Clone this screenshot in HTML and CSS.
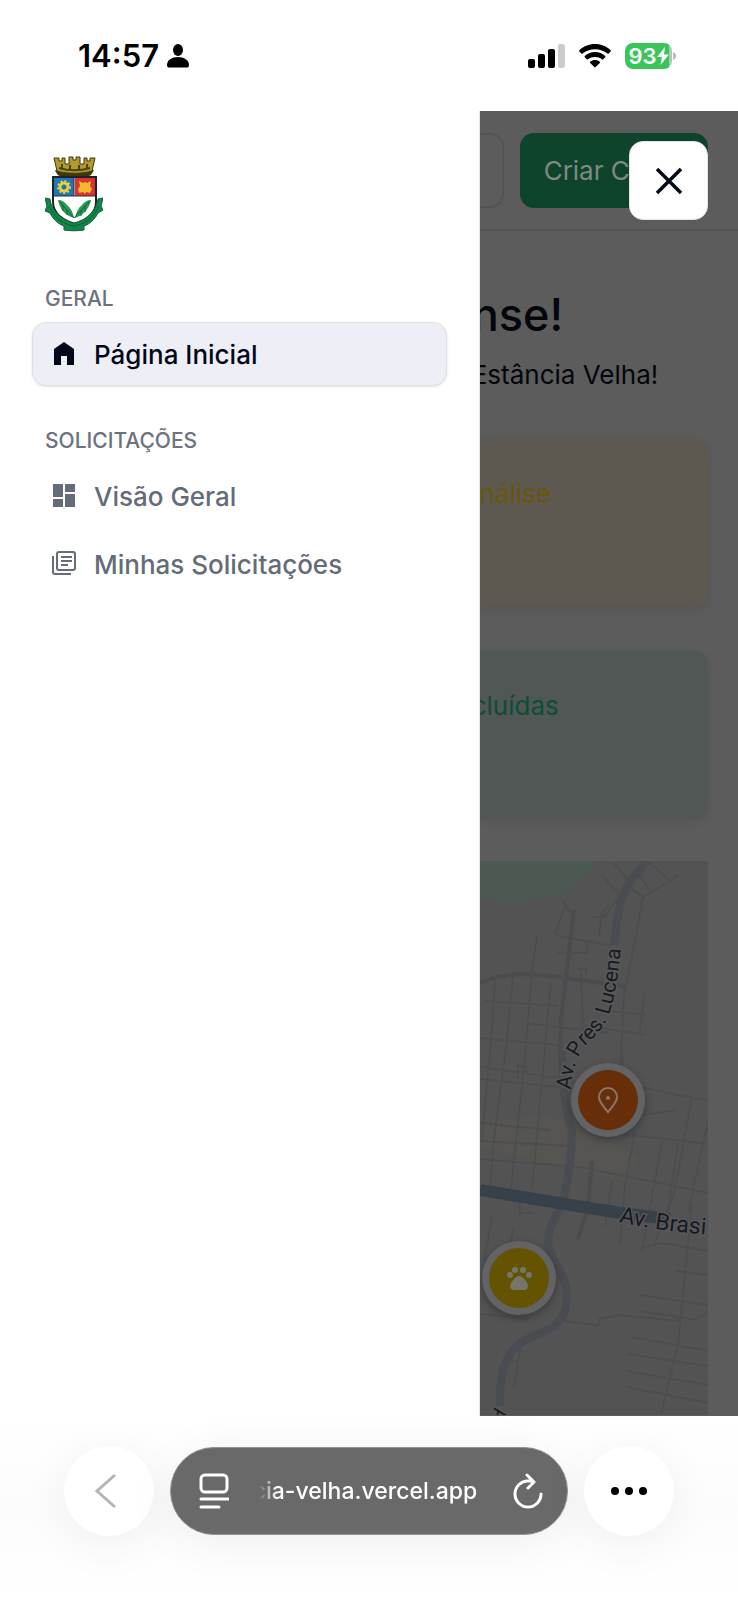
FILE: index.html
```html
<!DOCTYPE html>
<html lang="pt-br">
<head>
  <meta charset="UTF-8" />
  <meta name="viewport" content="width=device-width, initial-scale=1.0" />
  <title>Estância Velha</title>
  <link rel="stylesheet" href="styles.css">
</head>
<body>

  <div class="status-bar">
    <div class="status-hora">
      <span>14:57</span>
      <svg width="22" height="24" viewBox="0 0 22 24"><ellipse cx="11" cy="6" rx="5" ry="6"/><path d="M0 21C0 16 5 13 11 13s11 3 11 8c0 2-1 2.500-2 2.500H2C1 23.500 0 23 0 21z"/></svg>
    </div>
    <div class="status-icones">
      <svg width="37" height="24" viewBox="0 0 37 24"><rect y="15" width="7" height="9" rx="2"/><rect x="10" y="10" width="7" height="14" rx="2"/><rect x="20" y="5" width="7" height="19" rx="2"/><rect class="sinal-fraco" x="30" width="7" height="24" rx="2"/></svg>
      <svg width="32" height="24" viewBox="0 0 32 24"><path d="M16 0C9.800 0 4.200 2.400.4 6.200c-.4.400-.4.900 0 1.300l1.900 1.900c.4.400.9.400 1.300 0C6.800 6.900 11.200 5.200 16 5.200s9.200 1.700 12.400 4.200c.4.400.9.400 1.300 0l1.900-1.900c.4-.4.400-.9 0-1.300C27.800 2.400 22.200 0 16 0z"/><path d="M16 8c-4 0-7.500 1.500-10.200 4-.4.400-.4.900 0 1.300l1.900 1.900c.4.400.9.400 1.300 0 1.900-1.500 4.300-2.200 7-2.200s5.100.7 7 2.200c.4.400.9.400 1.300 0l1.900-1.900c.4-.4.400-.9 0-1.300C23.500 9.500 20 8 16 8z"/><path d="M16 16c-1.800 0-3.500.6-4.800 1.700-.4.400-.4.900 0 1.200l4.100 4.200c.4.400 1 .4 1.400 0l4.100-4.200c.4-.3.400-.8 0-1.200C19.500 16.600 17.800 16 16 16z"/></svg>
      <div class="bateria">
        <div class="bateria-carga">
          <span>93</span>
          <svg width="12" height="18" viewBox="0 0 12 18"><path d="M8 0 0 10h5L3.500 18 12 7.500H7z"/></svg>
        </div>
        <svg width="3" height="8" viewBox="0 0 3 8"><path d="M0 0q3 1 3 4T0 8z"/></svg>
      </div>
    </div>
  </div>

  <div class="app">
    <aside class="menu">
      <svg class="brasao" width="58" height="78" viewBox="0 0 58 78" role="img" aria-label="Brasão">
        <path d="M10 14h39l-3 5c-7 4-26 4-33 0z" fill="#4b4310"/>
        <path d="M9 2h5v3h3V2h3v6h4V1h4v3h3V1h4v7h4V2h3v3h3V2h5l-3 13c-9 3-26 3-35 0z" fill="#b39a2c" stroke="#3d390f"/>
        <path d="M14 12c9 3 22 3 31 0M17 8v4M25 9v4M34 9v4M42 8v4" fill="none" stroke="#4b4310" stroke-width="2"/>
        <path d="M10 15c9 4 29 4 38 0l-3 4c-7 4-25 4-32 0z" fill="#3d390f"/>
        <path d="M8 21h43v25c0 12-11 19-21 22C19 65 8 58 8 46z" fill="#fff" stroke="#20232a" stroke-width="2"/>
        <path d="M9 22h20v18H9z" fill="#1e75b8"/>
        <path d="M30 22h20v18H30z" fill="#d93530"/>
        <path d="M9 40h41M29 22v18" stroke="#26303c"/>
        <circle cx="19" cy="31" r="4" fill="none" stroke="#edcf39" stroke-width="3"/>
        <circle cx="19" cy="31" r="6" fill="none" stroke="#edcf39" stroke-width="2" stroke-dasharray="2 2"/>
        <path d="m34 25 4 2 2-1 2 1 4-2-1 5 2 3-2 4-4-1-1 2-2-2-4 1-1-4 2-3z" fill="#f3b72f"/>
        <path d="M29 62c-8-2-14-8-16-18 4 0 7 2 9 5 4 3 6 8 7 13zM30 62c7-2 14-8 16-18-4 0-7 2-9 5-4 3-6 8-7 13z" fill="#2c9858"/>
        <path d="M14 45l15 17 16-17M18 49v6M22 53v6M40 50v6M36 54v6" fill="none" stroke="#12633b"/>
        <path d="M0 42l5 1c1 11 11 21 24 24 13-3 23-13 24-24l5-1-2 8 2 4-5 3c-3 6-8 11-14 13v4c-6 1-14 1-20 0v-4C13 68 8 63 5 57l-5-2 2-5z" fill="#138549" stroke="#0b6134"/>
        <path d="M4 50c5 11 13 18 25 20 12-2 20-9 25-20" fill="none" stroke="#0b6134"/>
      </svg>

      <nav class="menu-nav">
        <section class="grupo">
          <h2 class="grupo-titulo">GERAL</h2>
          <a class="item ativo" href="#">
            <svg width="30" height="30" viewBox="0 0 30 30"><path d="M15 3 5 10v16h7v-9h6v9h7V10z"/></svg>
            Página Inicial
          </a>
        </section>
        <section class="grupo">
          <h2 class="grupo-titulo">SOLICITAÇÕES</h2>
          <a class="item" href="#">
            <svg width="30" height="30" viewBox="0 0 30 30"><path d="M4 3h10v13H4zM16 3h10v8H16zM4 18h10v8H4zM16 13h10v13H16z"/></svg>
            Visão Geral
          </a>
          <a class="item" href="#">
            <svg width="30" height="30" viewBox="0 0 30 30"><g fill="none" stroke="currentColor" stroke-width="2"><rect x="8" y="3" width="18" height="18" rx="2"/><path d="M4 7v16q0 2 2 2h16M12 8h11M12 12h11M12 16h7"/></g></svg>
            Minhas Solicitações
          </a>
        </section>
      </nav>
    </aside>

    <main class="pagina">
      <header class="topo">
        <span class="botao-vazio"></span>
        <button class="botao-criar">Criar Conta</button>
        <button class="fechar" aria-label="Fechar">
          <svg width="30" height="30" viewBox="0 0 30 30"><path d="M3 3l24 24M27 3L3 27"/></svg>
        </button>
      </header>

      <div class="conteudo">
        <h1 class="cortado">nse!</h1>
        <p class="subtitulo cortado">Estância Velha!</p>
        <div class="card analise"><p>nálise</p></div>
        <div class="card concluidas"><p class="cortado">cluídas</p></div>

        <div class="mapa">
          <svg width="228" height="554" viewBox="0 0 228 554">
            <path d="M0 0h119c-18 28-48 42-91 43L0 38z" fill="#4c5953"/>
            <path d="M28 258l40-4 60 26 30 16-14 24-64-14-80-20v-24z" fill="#565552"/>
            <g class="rua">
              <path d="M122 14l18 21M134 2l14 17M158 13l12 16M168 0l22 20 8-6M190 20l-27 16-12-9M163 36l-9 48-10 50-2 42-2 30M112 56h12l13-17M119 76l3-24 8-8M75 73l10-28 9 10M84 40l7 12M75 74l57 11M57 74l-5 37M77 92h30V80M5 140l73 5M15 120l-3 48-10 110M33 115l-6 64-13 98-4 52M52 112l-6 74-15 142M71 121l-7 78-12 130M46 162l82 10M0 177l79 7M0 206l77 11M101 109l2 60M98 108h8v6M130 150l36 4M164 132l-4 38M100 164l66 10M141 180l2 25M38 218v-14l8 2v6"/>
              <path d="M0 218l78 8M0 262l70 7M140 222l88 18M162 254l35-5M0 298l100 8 128 26M140 273l88 10M0 280l90 5M212 235l-18 98-20 50M228 260l-20 92M155 270l-10 54-5 60M182 280l-20 110M198 282l-10 68M132 320l-7 45M161 387l21-5 46 8M212 343l-14 140-17 71M195 410l33 4M160 434l68 10M160 450l50 8q10 2 18-8M0 453l48 5M75 458l44 7v-7l20-4 60 6M190 452l12 9M152 476l76 14M148 493l80 12M146 510l82 14M146 526l82 16M42 478l-8 48M24 498l14 3M34 366l-9 40M12 356l-8 44M40 340v12h13"/>
            </g>
            <g class="avenida-fina">
              <path d="M0 122c30-14 60-10 145 4M94 48l-7 60-6 50q-2 50 2 80M112 300l-4 46-10 32"/>
            </g>
            <g class="avenida">
              <path d="M168 0q-26 24-29 50-4 16-4 34"/>
              <path d="M82 190q0 50 10 80-1 36-7 61c-4 22-17 30-17 50 2 22 19 30 19 54 0 42-36 32-54 54-12 14-14 40-13 56"/>
            </g>
            <path class="brasil" d="M0 329l140 23 50 6"/>
            <path id="linha-lucena" d="M91 229q1-29 16-46 20-18 24-36 9-32 11-78" fill="none"/>
            <path id="linha-brasil" d="M139 361q45 10 96 13" fill="none"/>
            <text class="rotulo"><textPath href="#linha-lucena">Av. Pres. Lucena</textPath></text>
            <text class="rotulo rotulo-maior"><textPath href="#linha-brasil">Av. Brasi</textPath></text>
            <text class="rotulo" transform="translate(14 546) rotate(100)">A</text>

            <g class="pino" transform="translate(128 239)">
              <circle class="pino-borda" r="37"/>
              <circle r="30" fill="#672e09"/>
              <path d="M0 12C-5 6-9 2-9-3a9 9 0 0 1 18 0c0 5-4 9-9 15z" fill="none" stroke="#88776d" stroke-width="2"/>
              <circle cy="-2" r="2" fill="#88776d"/>
            </g>
            <g class="pino" transform="translate(39 417)">
              <circle class="pino-borda" r="37"/>
              <circle r="30" fill="#645300"/>
              <g fill="#77756a"><circle cx="-9" cy="-3" r="3"/><circle cx="-4" cy="-8" r="3"/><circle cx="4" cy="-8" r="3"/><circle cx="10" cy="-3" r="3"/><path d="M0-2c4 0 9 7 9 10s-2 4-4 4H-5c-3 0-4-2-4-4S-4-2 0-2z"/></g>
            </g>
          </svg>
        </div>
      </div>
    </main>
  </div>

  <div class="navegador">
    <button class="redondo voltar" aria-label="Voltar">
      <svg width="40" height="40" viewBox="0 0 40 40"><path d="M26 4L8 20l18 16"/></svg>
    </button>
    <div class="endereco">
      <button class="icone-barra" aria-label="Abas">
        <svg width="30" height="36" viewBox="0 0 30 36"><rect x="2" y="2" width="26" height="17" rx="4"/><path d="M2 26h27M2 34h18"/></svg>
      </button>
      <span class="url">cia-velha.vercel.app</span>
      <button class="icone-barra" aria-label="Recarregar">
        <svg width="30" height="36" viewBox="0 0 30 36"><path d="M20 8H15A13 13 0 1 0 28 21M14 2l7 7-6 6"/></svg>
      </button>
    </div>
    <button class="redondo" aria-label="Mais">
      <svg width="38" height="10" viewBox="0 0 38 10"><circle cx="5" cy="5" r="4"/><circle cx="19" cy="5" r="4"/><circle cx="33" cy="5" r="4"/></svg>
    </button>
  </div>

</body>
</html>
```

FILE: styles.css
```css
* {
  box-sizing: border-box;
  margin: 0;
  padding: 0;
}

body {
  font-family: 'Inter', sans-serif;
  font-size: 26px;
  background-color: #fff;
  color: #04060b;
  display: flex;
  flex-direction: column;
  min-height: 100vh;
}

button {
  border: none;
  font: inherit;
  cursor: pointer;
}

a {
  color: inherit;
  text-decoration: none;
}

svg {
  display: block;
  flex-shrink: 0;
}

/* barra de status */
.status-bar {
  display: flex;
  justify-content: space-between;
  align-items: center;
  height: 111px;
  padding: 0 62px 0 78px;
  color: #000;
}

.status-hora,
.status-icones {
  display: flex;
  align-items: center;
  gap: 8px;
}

.status-hora {
  font-size: 31px;
  font-weight: 600;
}

.status-icones {
  gap: 14px;
}

.sinal-fraco {
  fill: #ccc;
}

.bateria {
  display: flex;
  align-items: center;
  gap: 1px;
  fill: #bbb;
}

.bateria-carga {
  display: flex;
  align-items: center;
  justify-content: center;
  width: 47px;
  height: 26px;
  border-radius: 8px;
  background: linear-gradient(to right, #3ac55b 93%, #a9cdb1 93%);
  color: #fff;
  font-size: 22px;
  font-weight: 600;
}

.bateria-carga svg {
  fill: #fff;
}

/* area do app */
.app {
  flex: 1;
  display: grid;
  grid-template-columns: 65fr 35fr;
}

.menu {
  position: relative;
  z-index: 1;
  background-color: #fff;
  border-right: 1px solid #e2e4e9;
  padding: 45px 32px;
}

.brasao {
  margin-left: 13px;
}

.menu-nav {
  display: flex;
  flex-direction: column;
  gap: 40px;
  margin-top: 50px;
}

.grupo {
  display: flex;
  flex-direction: column;
  gap: 4px;
}

.grupo-titulo {
  padding-left: 13px;
  font-size: 21px;
  line-height: 30px;
  font-weight: 500;
  color: #6b7280;
  margin-bottom: 4px;
}

.item {
  display: flex;
  align-items: center;
  gap: 15px;
  height: 64px;
  padding: 0 16px;
  border: 1px solid transparent;
  border-radius: 14px;
  font-weight: 500;
  color: #646b79;
}

.item svg {
  fill: currentColor;
}

.item.ativo {
  background-color: #eeeff6;
  border-color: #e0e1e7;
  box-shadow: 0 1px 3px rgba(0, 0, 0, 0.1);
  color: #020817;
}

/* pagina escurecida atras do menu */
.pagina {
  min-width: 0;
  background-color: #5c5c5c;
  overflow: hidden;
}

.topo {
  position: relative;
  display: flex;
  align-items: center;
  gap: 16px;
  height: 120px;
  padding-right: 30px;
  border-bottom: 2px solid #545454;
}

.botao-vazio {
  flex: 1;
  height: 75px;
  border: 2px solid #545454;
  border-left: none;
  border-radius: 0 14px 14px 0;
}

.botao-criar {
  height: 75px;
  padding: 0 24px;
  border-radius: 14px;
  background-color: #0e432c;
  color: #808a84;
  font-weight: 400;
}

.fechar {
  position: absolute;
  top: 30px;
  right: 30px;
  display: flex;
  align-items: center;
  justify-content: center;
  width: 79px;
  height: 79px;
  border: 1px solid #e2e4e9;
  border-radius: 14px;
  background-color: #fff;
}

.fechar svg {
  fill: none;
  stroke: #020817;
  stroke-width: 3.500;
}

.conteudo {
  padding: 56px 30px 0 0;
}

/* textos que continuam por baixo do menu */
.cortado {
  margin-left: -8px;
}

h1 {
  font-size: 45px;
  line-height: 56px;
  font-weight: 500;
}

.subtitulo {
  margin-top: 12px;
  line-height: 40px;
}

.card {
  height: 168px;
  margin-top: 44px;
  padding-top: 35px;
  border-radius: 0 14px 14px 0;
  line-height: 40px;
  box-shadow: 0 3px 8px rgba(0, 0, 0, 0.08);
}

.analise {
  background-color: #5d5850;
  color: #6a560b;
}

.concluidas {
  background-color: #505754;
  color: #0f4d34;
}

.mapa {
  margin-top: 42px;
  height: 554px;
  background-color: #535353;
  overflow: hidden;
}

.rua,
.avenida,
.avenida-fina {
  fill: none;
  stroke: #4b4c4f;
}

.rua {
  stroke-width: 2;
  stroke-opacity: 0.8;
}

.avenida-fina {
  stroke-width: 4;
}

.avenida {
  stroke: #494c50;
  stroke-width: 8;
}

.brasil {
  fill: none;
  stroke: #37414a;
  stroke-width: 12;
}

.rotulo {
  font-family: Roboto, sans-serif;
  font-size: 21px;
  fill: #171923;
  stroke: #595959;
  stroke-width: 3;
  paint-order: stroke;
}

.rotulo-maior {
  font-size: 23px;
}

.pino {
  filter: drop-shadow(0 3px 4px rgba(0, 0, 0, 0.3));
}

.pino-borda {
  fill: #626365;
}

/* barra do navegador */
.navegador {
  display: flex;
  justify-content: center;
  align-items: center;
  gap: 16px;
  height: 184px;
  padding: 0 64px 34px;
  background: linear-gradient(#fff, #fcfcfc 50%, #fff);
}

.redondo {
  display: flex;
  align-items: center;
  justify-content: center;
  width: 90px;
  height: 90px;
  border-radius: 50%;
  background-color: #fff;
  box-shadow: 0 8px 50px rgba(0, 0, 0, 0.06);
  flex-shrink: 0;
}

.voltar svg {
  fill: none;
  stroke: #b5b5b5;
  stroke-width: 3;
}

.endereco {
  flex: 1;
  display: flex;
  align-items: center;
  justify-content: space-between;
  height: 88px;
  padding: 0 24px 0 28px;
  border: 1px solid #939393;
  border-radius: 44px;
  background-color: #696969;
  color: #fff;
  box-shadow: 0 8px 50px rgba(0, 0, 0, 0.06);
}

.icone-barra {
  background: none;
}

.icone-barra svg {
  fill: none;
  stroke: #fff;
  stroke-width: 3;
  stroke-linecap: round;
  stroke-linejoin: round;
}

.url {
  padding-right: 12px;
  font-size: 23px;
  font-weight: 500;
  -webkit-mask-image: linear-gradient(to right, transparent 6px, #000 24px);
  mask-image: linear-gradient(to right, transparent 6px, #000 24px);
}
```
